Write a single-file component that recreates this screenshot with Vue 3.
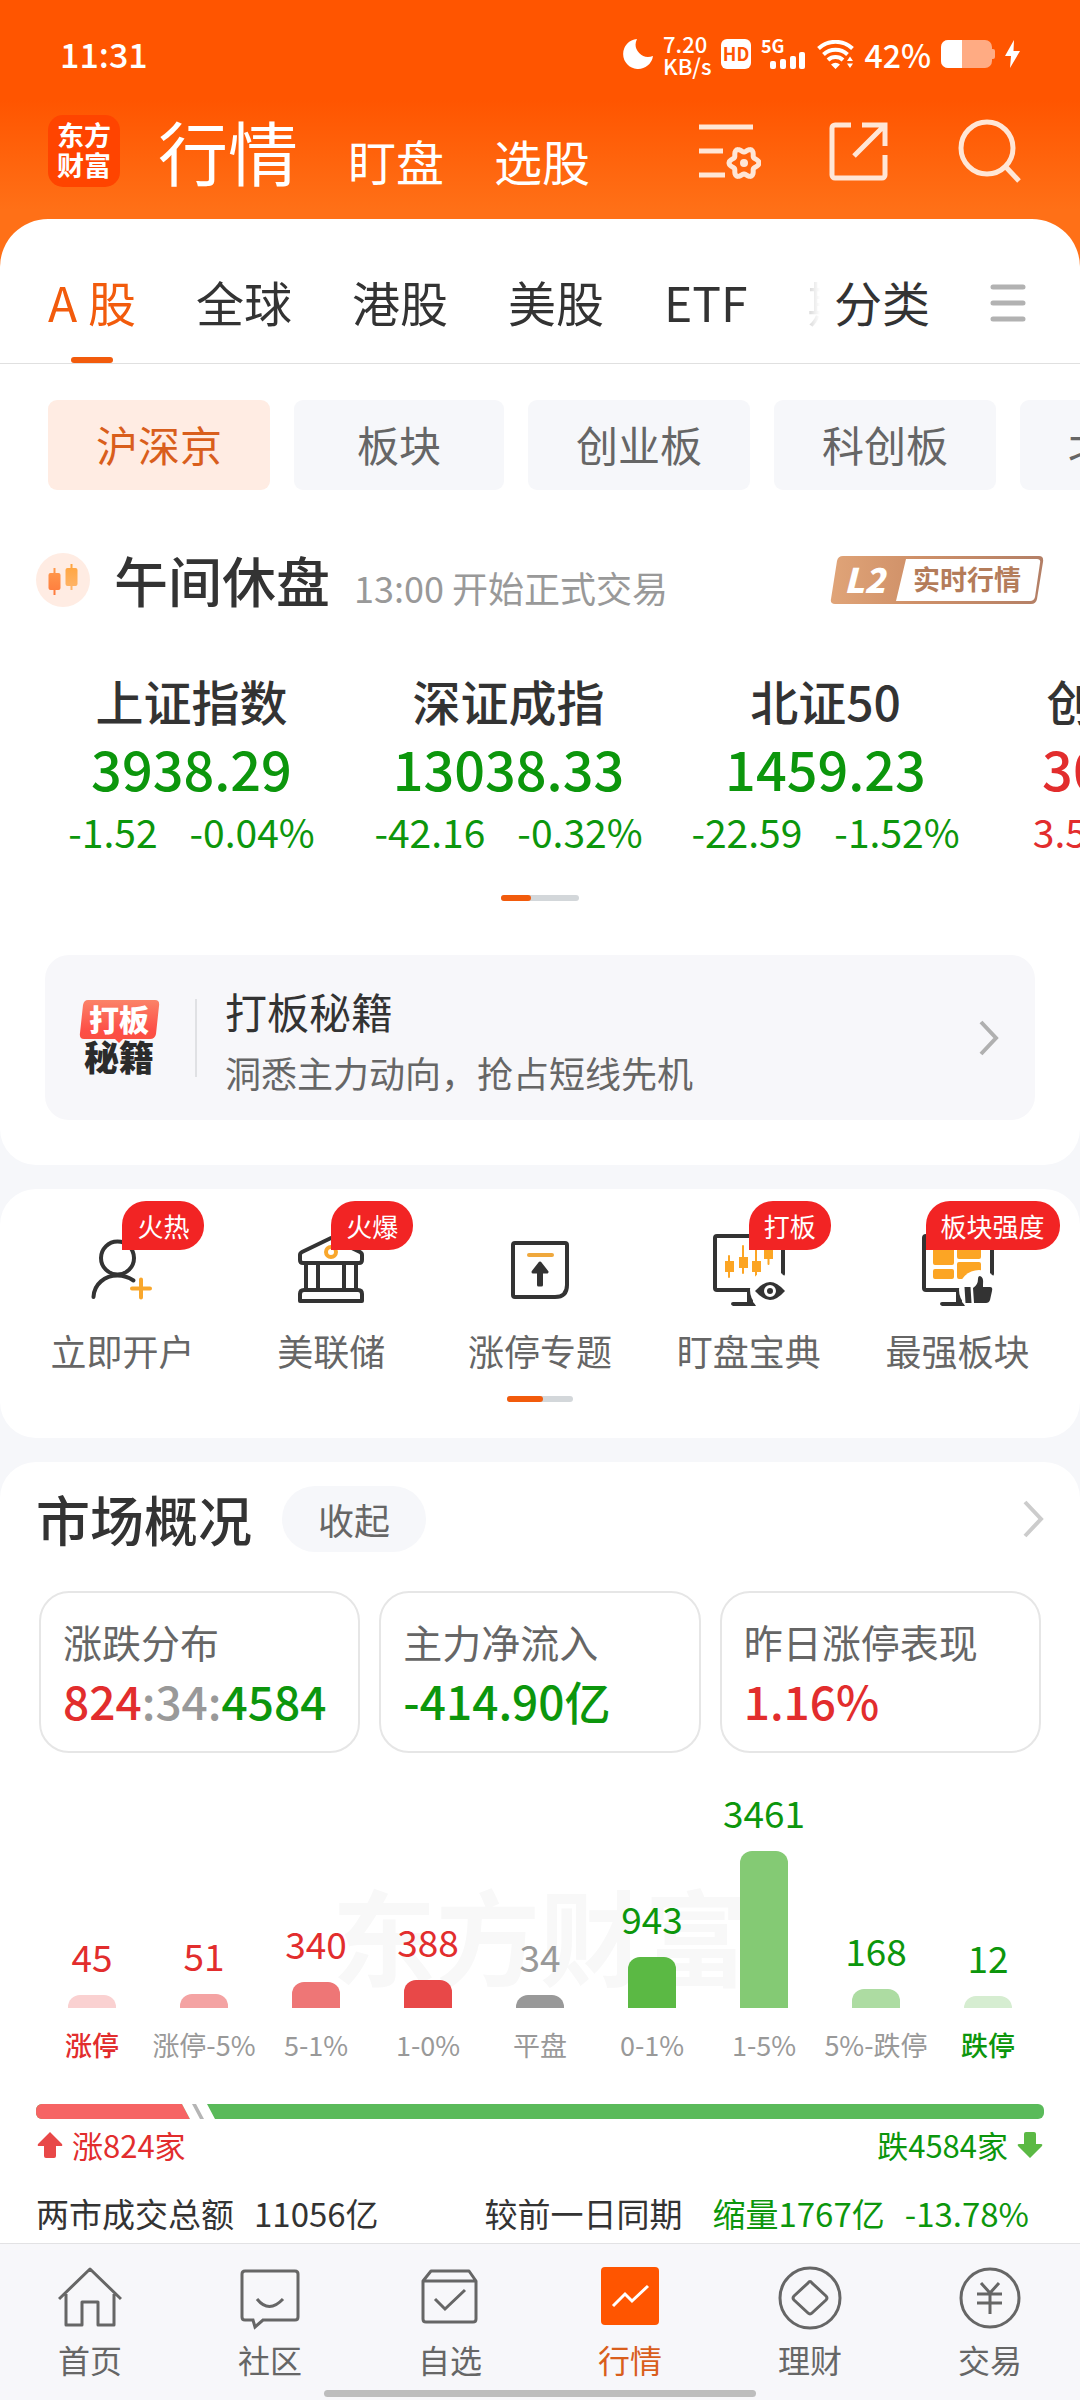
<script setup>
import { ref } from 'vue'

const gear = (() => {
  const pts = []
  for (let i = 0; i < 72; i++) {
    const a = (i / 72) * Math.PI * 2
    const r = 13 + 2 * Math.cos(6 * a)
    pts.push(`${(47 + r * Math.cos(a)).toFixed(1)} ${(44 + r * Math.sin(a)).toFixed(1)}`)
  }
  return `M${pts.join('L')}Z`
})()

const tabs = ['A 股', '全球', '港股', '美股', 'ETF', '期货']
const activeTab = ref('A 股')

const chips = ['沪深京', '板块', '创业板', '科创板', '北交所']
const activeChip = ref('沪深京')

const indices = [
  { name: '上证指数', value: '3938.29', diff: '-1.52', pct: '-0.04%', dir: 'down' },
  { name: '深证成指', value: '13038.33', diff: '-42.16', pct: '-0.32%', dir: 'down' },
  { name: '北证50', value: '1459.23', diff: '-22.59', pct: '-1.52%', dir: 'down' },
  { name: '创业板指', value: '3021.66', diff: '3.55', pct: '0.12%', dir: 'up' }
]

const tools = [
  { id: 'account', label: '立即开户', tag: '火热' },
  { id: 'bank', label: '美联储', tag: '火爆' },
  { id: 'limit', label: '涨停专题', tag: '' },
  { id: 'watch', label: '盯盘宝典', tag: '打板' },
  { id: 'strong', label: '最强板块', tag: '板块强度' }
]

const bars = [
  { count: 45, label: '涨停', h: 13, fill: '#fad1d1', tone: 'up', strong: true },
  { count: 51, label: '涨停-5%', h: 14, fill: '#f4a3a3', tone: 'up' },
  { count: 340, label: '5-1%', h: 26, fill: '#ee7676', tone: 'up' },
  { count: 388, label: '1-0%', h: 28, fill: '#e84848', tone: 'up' },
  { count: 34, label: '平盘', h: 13, fill: '#999999', tone: 'flat' },
  { count: 943, label: '0-1%', h: 51, fill: '#5bb944', tone: 'down' },
  { count: 3461, label: '1-5%', h: 157, fill: '#84ca74', tone: 'down' },
  { count: 168, label: '5%-跌停', h: 19, fill: '#addca2', tone: 'down' },
  { count: 12, label: '跌停', h: 12, fill: '#d6edd1', tone: 'down', strong: true }
]

const nav = [
  { id: 'home', label: '首页' },
  { id: 'club', label: '社区' },
  { id: 'picks', label: '自选' },
  { id: 'market', label: '行情', active: true },
  { id: 'wealth', label: '理财' },
  { id: 'trade', label: '交易' }
]
</script>

<template>
  <div class="page">
    <header class="top">
      <div class="status">
        <span class="time">11:31</span>
        <div class="signals">
          <svg width="30" height="30" viewBox="0 0 30 30"><path d="M14 0A15 15 0 1 0 30 17A12.500 12.500 0 0 1 14 0Z" fill="#fff" /></svg>
          <span class="speed">7.20<br />KB/s</span>
          <svg width="30" height="30" viewBox="0 0 30 30">
            <rect width="30" height="30" rx="6" fill="#fff" />
            <text x="15" y="22" text-anchor="middle" font-size="18" font-weight="700" fill="#ff5500">HD</text>
          </svg>
          <svg width="46" height="30" viewBox="0 0 46 30" fill="#fff">
            <text x="0" y="14" font-size="18" font-weight="700">5G</text>
            <rect x="9" y="22" width="6" height="8" rx="2" />
            <rect x="19" y="20" width="6" height="10" rx="2" />
            <rect x="29" y="17" width="6" height="13" rx="2" />
            <rect x="38" y="13" width="6" height="17" rx="2" />
          </svg>
          <svg width="37" height="29" viewBox="0 0 37 29">
            <g fill="none" stroke="#fff" stroke-width="4">
              <path d="M1.500 8.500A25 25 0 0 1 35.500 8.500" />
              <path d="M6.500 14.500A17.500 17.500 0 0 1 30.500 14.500" />
              <path d="M11 20A11 11 0 0 1 26 20" />
            </g>
            <path d="M14 24.500Q18.500 21 23 24.500L18.500 29ZM30 21l3-4.500 3 4.500zM30 23.500l3 4.500 3-4.500z" fill="#fff" />
          </svg>
          <span class="percent">42%</span>
          <svg width="54" height="28" viewBox="0 0 54 28">
            <rect width="51" height="28" rx="7" fill="#ffab83" />
            <path d="M51 9h1a2 2 0 0 1 2 2v6a2 2 0 0 1-2 2h-1z" fill="#ffab83" />
            <path d="M7 0H21V28H7A7 7 0 0 1 0 21V7A7 7 0 0 1 7 0Z" fill="#fff" />
          </svg>
          <svg width="15" height="28" viewBox="0 0 15 28"><path d="M9 0L0 16H6L5 28L15 11H8.500Z" fill="#fff" /></svg>
        </div>
      </div>

      <div class="masthead">
        <span class="brand">东方<br />财富</span>
        <h1>行情</h1>
        <a href="#watch">盯盘</a>
        <a href="#select">选股</a>
        <div class="actions">
          <button type="button" aria-label="设置">
            <svg width="64" height="64" viewBox="0 0 64 64" fill="none" stroke="#ffe6d6" stroke-width="5">
              <path d="M2 8H56M2 32H26M2 56H28" />
              <path :d="gear" stroke-linejoin="round" />
              <circle cx="47" cy="44" r="4" fill="#ffe6d6" stroke="none" />
            </svg>
          </button>
          <button type="button" aria-label="分享">
            <svg width="64" height="64" viewBox="0 0 64 64" fill="none" stroke="#ffe6d6" stroke-width="5">
              <path d="M24 6H8A3 3 0 0 0 5 9V56A3 3 0 0 0 8 59H55A3 3 0 0 0 58 56V36M35 6H58V27M57 7L27 37" />
            </svg>
          </button>
          <button type="button" aria-label="搜索">
            <svg width="64" height="64" viewBox="0 0 64 64" fill="none" stroke="#ffe6d6" stroke-width="5">
              <circle cx="30" cy="29" r="26" />
              <path d="M48 47L62 62" />
            </svg>
          </button>
        </div>
      </div>
    </header>

    <main>
      <section class="sheet quotes">
        <nav class="tabs">
          <div class="tab-scroll">
            <button
              v-for="t in tabs"
              :key="t"
              type="button"
              :class="{ on: t === activeTab }"
              @click="activeTab = t"
            >{{ t }}</button>
          </div>
          <button type="button" class="category">分类</button>
          <button type="button" class="menu" aria-label="菜单">
            <svg width="36" height="38" viewBox="0 0 36 38" stroke="#b2b2b2" stroke-width="5" stroke-linecap="round"><path d="M3 3H33M3 19H33M3 35H33" /></svg>
          </button>
        </nav>

        <div class="chips">
          <button
            v-for="c in chips"
            :key="c"
            type="button"
            :class="{ on: c === activeChip }"
            @click="activeChip = c"
          >{{ c }}</button>
        </div>

        <div class="session">
          <svg width="54" height="54" viewBox="0 0 54 54">
            <defs>
              <linearGradient id="candleA" x1="0" y1="0" x2="0" y2="1"><stop offset="0" stop-color="#ff9a4d" /><stop offset="1" stop-color="#ff7a3c" /></linearGradient>
              <linearGradient id="candleB" x1="0" y1="0" x2="0" y2="1"><stop offset="0" stop-color="#ffa43c" /><stop offset="1" stop-color="#ffb56c" /></linearGradient>
            </defs>
            <circle cx="27" cy="27" r="27" fill="#ffece3" />
            <path d="M17.500 15h2v5h3a2 2 0 0 1 2 2v13a2 2 0 0 1-2 2h-3v5h-2v-5h-3a2 2 0 0 1-2-2V22a2 2 0 0 1 2-2h3z" fill="url(#candleA)" />
            <path d="M34.500 11h2v4h3a2 2 0 0 1 2 2v14a2 2 0 0 1-2 2h-3v4h-2v-4h-3a2 2 0 0 1-2-2V17a2 2 0 0 1 2-2h3z" fill="url(#candleB)" />
          </svg>
          <h2>午间休盘</h2>
          <span class="note">13:00 开始正式交易</span>
          <a class="level2" href="#l2" aria-label="L2 实时行情">
            <svg width="214" height="48" viewBox="0 0 214 48">
              <defs>
                <linearGradient id="l2" x1="0" y1="0" x2="1" y2="0"><stop offset="0" stop-color="#e0a478" /><stop offset="0.400" stop-color="#cf9068" /><stop offset="1" stop-color="#b37f66" /></linearGradient>
              </defs>
              <path d="M13 0H209Q214 0 213 6L207 43Q206 48 201 48H5Q0 48 1 43L7 5Q8 0 13 0Z" fill="url(#l2)" />
              <path d="M76 3H207Q211 3 210 7L205 41Q204 45 200 45H66Z" fill="#fff" />
              <text x="14" y="37" font-size="34" font-weight="900" font-style="italic" fill="#fff">L2</text>
              <text x="83" y="34" font-size="27" font-weight="700" fill="#b47c5a">实时行情</text>
            </svg>
          </a>
        </div>

        <div class="indices">
          <a v-for="i in indices" :key="i.name" href="#index" :class="i.dir">
            <span class="name">{{ i.name }}</span>
            <strong>{{ i.value }}</strong>
            <span class="change"><span>{{ i.diff }}</span><span>{{ i.pct }}</span></span>
          </a>
        </div>
        <div class="pager wide"><i></i></div>

        <a class="promo" href="#secret">
          <svg width="82" height="80" viewBox="0 0 82 80">
            <defs>
              <linearGradient id="promo" x1="0" y1="0" x2="0" y2="1"><stop offset="0" stop-color="#fb8368" /><stop offset="0.700" stop-color="#fd4f47" /><stop offset="1" stop-color="#f9503f" /></linearGradient>
            </defs>
            <path d="M9 2H76Q81 2 80 8L77 36Q76 41 71 41H44L40 45L36 41H5Q0 41 1 35L4 7Q5 2 9 2Z" fill="url(#promo)" />
            <text x="10" y="33" font-size="30" font-weight="900" fill="#fff">打板</text>
            <text x="5" y="73" font-size="35" font-weight="900" fill="#2b2b2b">秘籍</text>
          </svg>
          <span class="rule"></span>
          <span class="copy">
            <span class="head">打板秘籍</span>
            <span class="sub">洞悉主力动向，抢占短线先机</span>
          </span>
          <svg class="chev" width="20" height="36" viewBox="0 0 20 36" fill="none" stroke="#b0b0b0" stroke-width="4"><path d="M2 2L17 18L2 34" /></svg>
        </a>
      </section>

      <section class="card tools">
        <div class="tool-row">
          <a v-for="t in tools" :key="t.id" href="#tool" class="tool">
            <span class="pic">
              <svg width="84" height="84" viewBox="0 0 84 84" fill="none" stroke="#333" stroke-width="4" stroke-linecap="round" stroke-linejoin="round">
                <template v-if="t.id === 'account'">
                  <circle cx="37.500" cy="30" r="16.500" />
                  <path d="M13.500 69C14 56 25 47.500 37.500 47.500C44 47.500 49 49.500 53.500 52.500" />
                  <path d="M52 60.500H70M61 51.500V69.500" stroke="#f9a72c" />
                </template>
                <template v-else-if="t.id === 'bank'">
                  <path d="M42 10L13 24Q11 25 11 27V32Q11 35 14 35H70Q73 35 73 32V27Q73 25 71 24Z" />
                  <path d="M17 36V61M29 36V61M55 36V61M67 36V61" />
                  <path d="M11 73V66Q11 62 15 62H69Q73 62 73 66V73Z" />
                  <circle cx="42" cy="24" r="5" stroke="#f9a72c" />
                </template>
                <template v-else-if="t.id === 'limit'">
                  <path d="M17 15H67Q69 15 69 17V57Q69 69 57 69H17Q15 69 15 67V17Q15 15 17 15Z" />
                  <path d="M31 27H54" stroke="#efa83d" />
                  <path d="M42 35L49 44H43.500V57H40.500V44H35Z" fill="#333" stroke-width="3" />
                </template>
                <template v-else>
                  <path d="M76 46V10Q76 8 74 8H10Q8 8 8 10V60Q8 62 10 62H44" />
                  <template v-if="t.id === 'watch'">
                    <path d="M22 28V49M36 18V45M49 14V51M61.500 14V36" stroke="#fca524" stroke-width="2" />
                    <path d="M18 33h9v11h-9zM32 29h9v11h-9zM45 33h9v11h-9zM57 18h9v13h-9z" fill="#fca524" stroke="none" />
                  </template>
                  <template v-else>
                    <path d="M19 15h17q2 0 2 2v18q0 2-2 2H19q-2 0-2-2V17q0-2 2-2zM43 15h20q2 0 2 2v12q0 2-2 2H43q-2 0-2-2V17q0-2 2-2zM19 41h17q2 0 2 2v6q0 2-2 2H19q-2 0-2-2v-6q0-2 2-2zM43 34h20q2 0 2 2v15H43q-2 0-2-2V36q0-2 2-2z" fill="#fca524" stroke="none" />
                  </template>
                  <path d="M40 62H46V74Q48 76 49 78H26Q24 77 24 76Q24 74 26 74H40Z" fill="#333" stroke="none" />
                  <circle cx="63" cy="62" r="20" fill="#fff" stroke="none" />
                  <template v-if="t.id === 'watch'">
                    <path d="M48 63Q56 54 63 54T78 63Q70 72 63 72T48 63Z" fill="#333" stroke="none" />
                    <circle cx="63" cy="63" r="4.500" fill="#333" stroke="#fff" stroke-width="3" />
                  </template>
                  <path v-else d="M48.500 59H54.500L55.500 75H49.500ZM57 60Q62 57 62 51Q62 48 64 48Q68 49 67 57V59H74Q77 59 76 63L74 72Q73 75 70 75H58Z" fill="#333" stroke="none" />
                </template>
              </svg>
              <em v-if="t.tag" :class="{ long: t.tag.length > 2 }">{{ t.tag }}</em>
            </span>
            <span class="caption">{{ t.label }}</span>
          </a>
        </div>
        <div class="pager"><i></i></div>
      </section>

      <section class="card overview">
        <div class="title-row">
          <h2>市场概况</h2>
          <button type="button" class="fold">收起</button>
          <svg class="chev" width="22" height="40" viewBox="0 0 22 40" fill="none" stroke="#ccc" stroke-width="4"><path d="M3 3L19 20L3 37" /></svg>
        </div>

        <div class="stats">
          <a href="#spread">
            <span>涨跌分布</span>
            <b><span class="up">824</span><span class="flat">:34:</span><span class="down">4584</span></b>
          </a>
          <a href="#inflow"><span>主力净流入</span><b class="down">-414.90亿</b></a>
          <a href="#yesterday"><span>昨日涨停表现</span><b class="up">1.16%</b></a>
        </div>

        <div class="chart">
          <span class="watermark" aria-hidden="true">东方财富</span>
          <div v-for="b in bars" :key="b.label" class="col">
            <span class="count" :class="b.tone">{{ b.count }}</span>
            <span class="bar" :style="{ height: b.h + 'px', background: b.fill }"></span>
            <span class="axis" :class="b.strong ? [b.tone, 'strong'] : 'flat'">{{ b.label }}</span>
          </div>
        </div>

        <svg class="ratio" width="100%" height="15">
          <rect width="100%" height="15" rx="6" fill="#5aba5a" />
          <path d="M6 0H146L154 15H6A6 6 0 0 1 0 9V6A6 6 0 0 1 6 0Z" fill="#f66464" />
          <path d="M146 0H171L179 15H154Z" fill="#fff" />
          <path d="M156 0H160L168 15H164Z" fill="#b5b5b5" />
        </svg>
        <div class="sides">
          <span class="up">
            <svg width="28" height="28" viewBox="0 0 28 28"><path d="M14 1L26 13Q27 15 25 15H20V25Q20 27 18 27H10Q8 27 8 25V15H3Q1 15 2 13Z" fill="#e84848" /></svg>
            涨824家
          </span>
          <span class="down">
            跌4584家
            <svg width="28" height="28" viewBox="0 0 28 28"><path d="M14 27L26 15Q27 13 25 13H20V3Q20 1 18 1H10Q8 1 8 3V13H3Q1 13 2 15Z" fill="#5bb944" /></svg>
          </span>
        </div>

        <div class="turnover">
          <span>两市成交总额</span>
          <span>11056亿</span>
          <span class="compare">较前一日同期</span>
          <span class="down">缩量1767亿</span>
          <span class="down">-13.78%</span>
        </div>
      </section>
    </main>

    <footer class="dock">
      <nav>
        <a v-for="n in nav" :key="n.id" :href="'#' + n.id" :class="{ on: n.active }">
          <svg width="64" height="64" viewBox="0 0 64 64" fill="none" stroke="#666" stroke-width="3">
            <path v-if="n.id === 'home'" d="M1 33L32 3L63 33M8 28V59H24V36H40V59H56V28" stroke-linejoin="round" />
            <template v-else-if="n.id === 'club'">
              <path d="M7 5H57Q60 5 60 8V51Q60 54 57 54H25L17 61L15 54H7Q4 54 4 51V8Q4 5 7 5Z" />
              <path d="M19 33Q31 48 45 33" />
            </template>
            <template v-else-if="n.id === 'picks'">
              <path d="M13 5H51L58 15V53Q58 56 55 56H8Q5 56 5 53V15ZM5 15H58" stroke-linejoin="round" />
              <path d="M17 33L27 43L47 24" />
            </template>
            <template v-else-if="n.id === 'market'">
              <rect x="3" y="1" width="58" height="58" rx="4" fill="#ff5500" stroke="none" />
              <path d="M15 40L27 28L34 35L50 20" stroke="#fff" />
            </template>
            <template v-else-if="n.id === 'wealth'">
              <circle cx="32" cy="32" r="30" />
              <path d="M30 17Q32 14 34 17L48 30Q50 32 48 34L34 47Q32 49 30 47L16 34Q14 32 16 30Z" />
            </template>
            <template v-else>
              <circle cx="32" cy="32" r="29" />
              <path d="M23 17L32 27L41 17M19 28H44M19 37H44M32 27V48" />
            </template>
          </svg>
          <span>{{ n.label }}</span>
        </a>
      </nav>
      <div class="grip"></div>
    </footer>
  </div>
</template>

<style>
body {
  margin: 0;
  background: #f6f7fa;
}
</style>

<style scoped>
.page,
.page button {
  font-family: "Noto Sans CJK SC", "Noto Sans", sans-serif;
}
.page {
  display: flex;
  flex-direction: column;
  min-height: 100vh;
  overflow: hidden;
  color: #333;
  background: #f6f7fa;
}
.page *,
.page *::after {
  box-sizing: border-box;
}
button {
  padding: 0;
  border: 0;
  background: none;
  color: inherit;
  white-space: nowrap;
}
a {
  color: inherit;
  text-decoration: none;
}
h1,
h2 {
  margin: 0;
}
h2 {
  font-size: 54px;
  line-height: 54px;
  font-weight: 500;
}
svg {
  display: block;
  flex: none;
}
.up { color: #e22d2d; }
.down { color: #0c960c; }
.flat { color: #999; }

/* header */
.top {
  padding-bottom: 80px;
  background: linear-gradient(#ff5500 100px, #ff7017 210px);
  color: #fff;
}
.status {
  display: flex;
  align-items: center;
  justify-content: space-between;
  height: 108px;
  padding: 0 60px;
  font-weight: 500;
}
.time {
  font-size: 34px;
  line-height: 48px;
}
.signals {
  display: flex;
  align-items: center;
  gap: 10px;
}
.speed {
  font-size: 22px;
  line-height: 22px;
}
.percent {
  font-size: 32px;
  line-height: 48px;
}
.masthead {
  display: flex;
  align-items: baseline;
  gap: 50px;
  padding: 7px 59px 0 48px;
}
.brand {
  align-self: flex-start;
  width: 72px;
  height: 72px;
  margin-right: -12px;
  padding: 5px 0;
  border-radius: 15px;
  background: #ff4400;
  font-size: 27px;
  line-height: 30px;
  font-weight: 700;
  text-align: center;
}
h1 {
  font-size: 70px;
  line-height: 72px;
  font-weight: 400;
}
.masthead > a {
  font-size: 48px;
  line-height: 48px;
}
.actions {
  display: flex;
  align-self: flex-start;
  gap: 66px;
  margin: 4px 0 0 auto;
}
.masthead {
  height: 111px;
}
.top {
  padding-bottom: 48px;
}

/* quotes */
.sheet {
  margin-top: -48px;
  padding-bottom: 45px;
  border-radius: 48px 48px 36px 36px;
  background: #fff;
}
.tabs {
  display: flex;
  align-items: flex-start;
  padding: 48px 54px 0 48px;
  border-bottom: 1px solid #e0e0e0;
}
.tabs button {
  flex: none;
  font-size: 48px;
  line-height: 68px;
}
.tab-scroll {
  display: flex;
  flex: 1;
  gap: 60px;
  overflow: hidden;
  -webkit-mask-image: linear-gradient(to right, #000 calc(100% - 60px), transparent);
  mask-image: linear-gradient(to right, #000 calc(100% - 60px), transparent);
}
.tab-scroll button {
  position: relative;
  padding-bottom: 28px;
}
.tab-scroll .on {
  color: #f25b0c;
}
.tab-scroll .on::after {
  content: "";
  position: absolute;
  left: calc(50% - 21px);
  bottom: 0;
  width: 42px;
  height: 6px;
  border-radius: 3px;
  background: #f25b0c;
}
.tabs .category {
  margin: 0 60px 0 14px;
}
.menu svg {
  margin-top: 17px;
}
.chips {
  display: flex;
  gap: 24px;
  padding: 36px 0 0 48px;
  overflow: hidden;
}
.chips button {
  flex: none;
  min-width: 210px;
  height: 90px;
  padding: 0 48px 4px;
  border-radius: 9px;
  background: #f6f7fa;
  color: #666;
  font-size: 42px;
}
.chips .on {
  background: #ffece3;
  color: #d95e1c;
}
.session {
  display: flex;
  align-items: baseline;
  gap: 24px;
  margin-top: 63px;
  padding: 0 36px;
}
.session > svg,
.level2 {
  align-self: center;
}
.note {
  color: #999;
  font-size: 36px;
  line-height: 36px;
}
.level2 {
  margin-left: auto;
}
.indices {
  display: flex;
  margin-top: 63px;
  padding-left: 33px;
  overflow: hidden;
}
.indices a {
  display: flex;
  flex: 0 0 317px;
  flex-direction: column;
  align-items: center;
}
.name {
  color: #333;
  font-size: 48px;
  line-height: 60px;
  font-weight: 500;
}
.indices strong {
  font-size: 54px;
  line-height: 76px;
  font-weight: 500;
}
.change {
  display: flex;
  gap: 32px;
  font-size: 39px;
  line-height: 50px;
}
.pager {
  width: 66px;
  height: 6px;
  margin: 22px auto 0;
  border-radius: 3px;
  background: #d3d7da;
}
.pager i {
  display: block;
  width: 36px;
  height: 6px;
  border-radius: 3px;
  background: #f25b0c;
}
.pager.wide {
  width: 78px;
  margin-top: 39px;
}
.pager.wide i {
  width: 30px;
}
.promo {
  display: flex;
  align-items: center;
  margin: 54px 45px 0;
  padding: 26px 36px 17px 34px;
  border-radius: 24px;
  background: #f7f7fa;
}
.rule {
  width: 2px;
  height: 78px;
  margin: 0 28px 9px 34px;
  background: #e0e1e4;
}
.promo > svg {
  margin-bottom: 9px;
}
.copy {
  display: flex;
  flex: 1;
  flex-direction: column;
}
.head {
  font-size: 42px;
  line-height: 60px;
}
.sub {
  color: #666;
  font-size: 36px;
  line-height: 62px;
}

/* tools */
.card {
  margin-top: 24px;
  border-radius: 36px;
  background: #fff;
}
.tools {
  padding: 39px 18px 36px;
}
.tool-row {
  display: flex;
}
.tool {
  display: flex;
  flex: 1;
  flex-direction: column;
  align-items: center;
  gap: 14px;
}
.pic {
  position: relative;
}
.pic em {
  position: absolute;
  top: -27px;
  left: 42px;
  padding: 0 15px;
  border-radius: 24px 24px 24px 0;
  background: #f22424;
  color: #fff;
  font-size: 26px;
  line-height: 49px;
  font-style: normal;
  white-space: nowrap;
}
.pic .long {
  left: 10px;
}
.caption {
  color: #666;
  font-size: 36px;
  line-height: 48px;
}

/* overview */
.overview {
  padding: 24px 36px 8px;
  border-radius: 36px 36px 0 0;
}
.title-row {
  display: flex;
  align-items: center;
}
.fold {
  margin-left: 30px;
  padding: 0 36px;
  border-radius: 33px;
  background: #f6f7fa;
  color: #666;
  font-size: 36px;
  line-height: 66px;
}
.title-row .chev {
  margin-left: auto;
}
.stats {
  display: grid;
  grid-template-columns: repeat(3, 1fr);
  gap: 19px;
  margin: 39px 3px 0;
}
.stats a {
  display: flex;
  flex-direction: column;
  padding: 22px 0 18px 22px;
  border: 2px solid #e6e6e6;
  border-radius: 30px;
}
.stats a > span {
  color: #666;
  font-size: 39px;
  line-height: 52px;
}
.stats b {
  font-size: 46px;
  line-height: 66px;
  font-weight: 500;
}
.chart {
  position: relative;
  display: flex;
  align-items: flex-end;
  margin-top: 32px;
}
.watermark {
  position: absolute;
  left: 50%;
  bottom: 66px;
  transform: translateX(-50%);
  color: #f8f8f8;
  font-size: 104px;
  line-height: 130px;
  font-weight: 700;
  white-space: nowrap;
}
.col {
  position: relative;
  display: flex;
  flex: 1 1 0;
  flex-direction: column;
  align-items: center;
  min-width: 0;
}
.count {
  margin-bottom: 12px;
  font-size: 37px;
  line-height: 54px;
}
.bar {
  width: 48px;
  border-radius: 12px 12px 0 0;
}
.axis {
  margin-top: 17px;
  font-size: 27px;
  line-height: 40px;
  white-space: nowrap;
}
.strong {
  font-weight: 500;
}
.ratio {
  margin-top: 39px;
}
.sides {
  display: flex;
  justify-content: space-between;
  margin-top: 4px;
  font-size: 31px;
  line-height: 44px;
}
.sides span {
  display: flex;
  align-items: center;
  gap: 8px;
}
.turnover {
  display: flex;
  gap: 20px;
  margin-top: 24px;
  padding-right: 15px;
  font-size: 33px;
  line-height: 44px;
}
.compare {
  margin: 0 10px 0 auto;
}

/* dock */
.dock {
  margin-top: auto;
  padding: 22px 0 3px;
  border-top: 1px solid #e2e2e4;
  background: #f7f7fa;
}
.dock nav {
  display: flex;
}
.dock a {
  display: flex;
  flex: 1;
  flex-direction: column;
  align-items: center;
  gap: 7px;
  color: #666;
  font-size: 32px;
  line-height: 44px;
}
.dock .on {
  color: #d95e1c;
}
.grip {
  width: 40%;
  height: 7px;
  margin: 9px auto 0;
  border-radius: 4px;
  background: #bdbdbd;
}
</style>
